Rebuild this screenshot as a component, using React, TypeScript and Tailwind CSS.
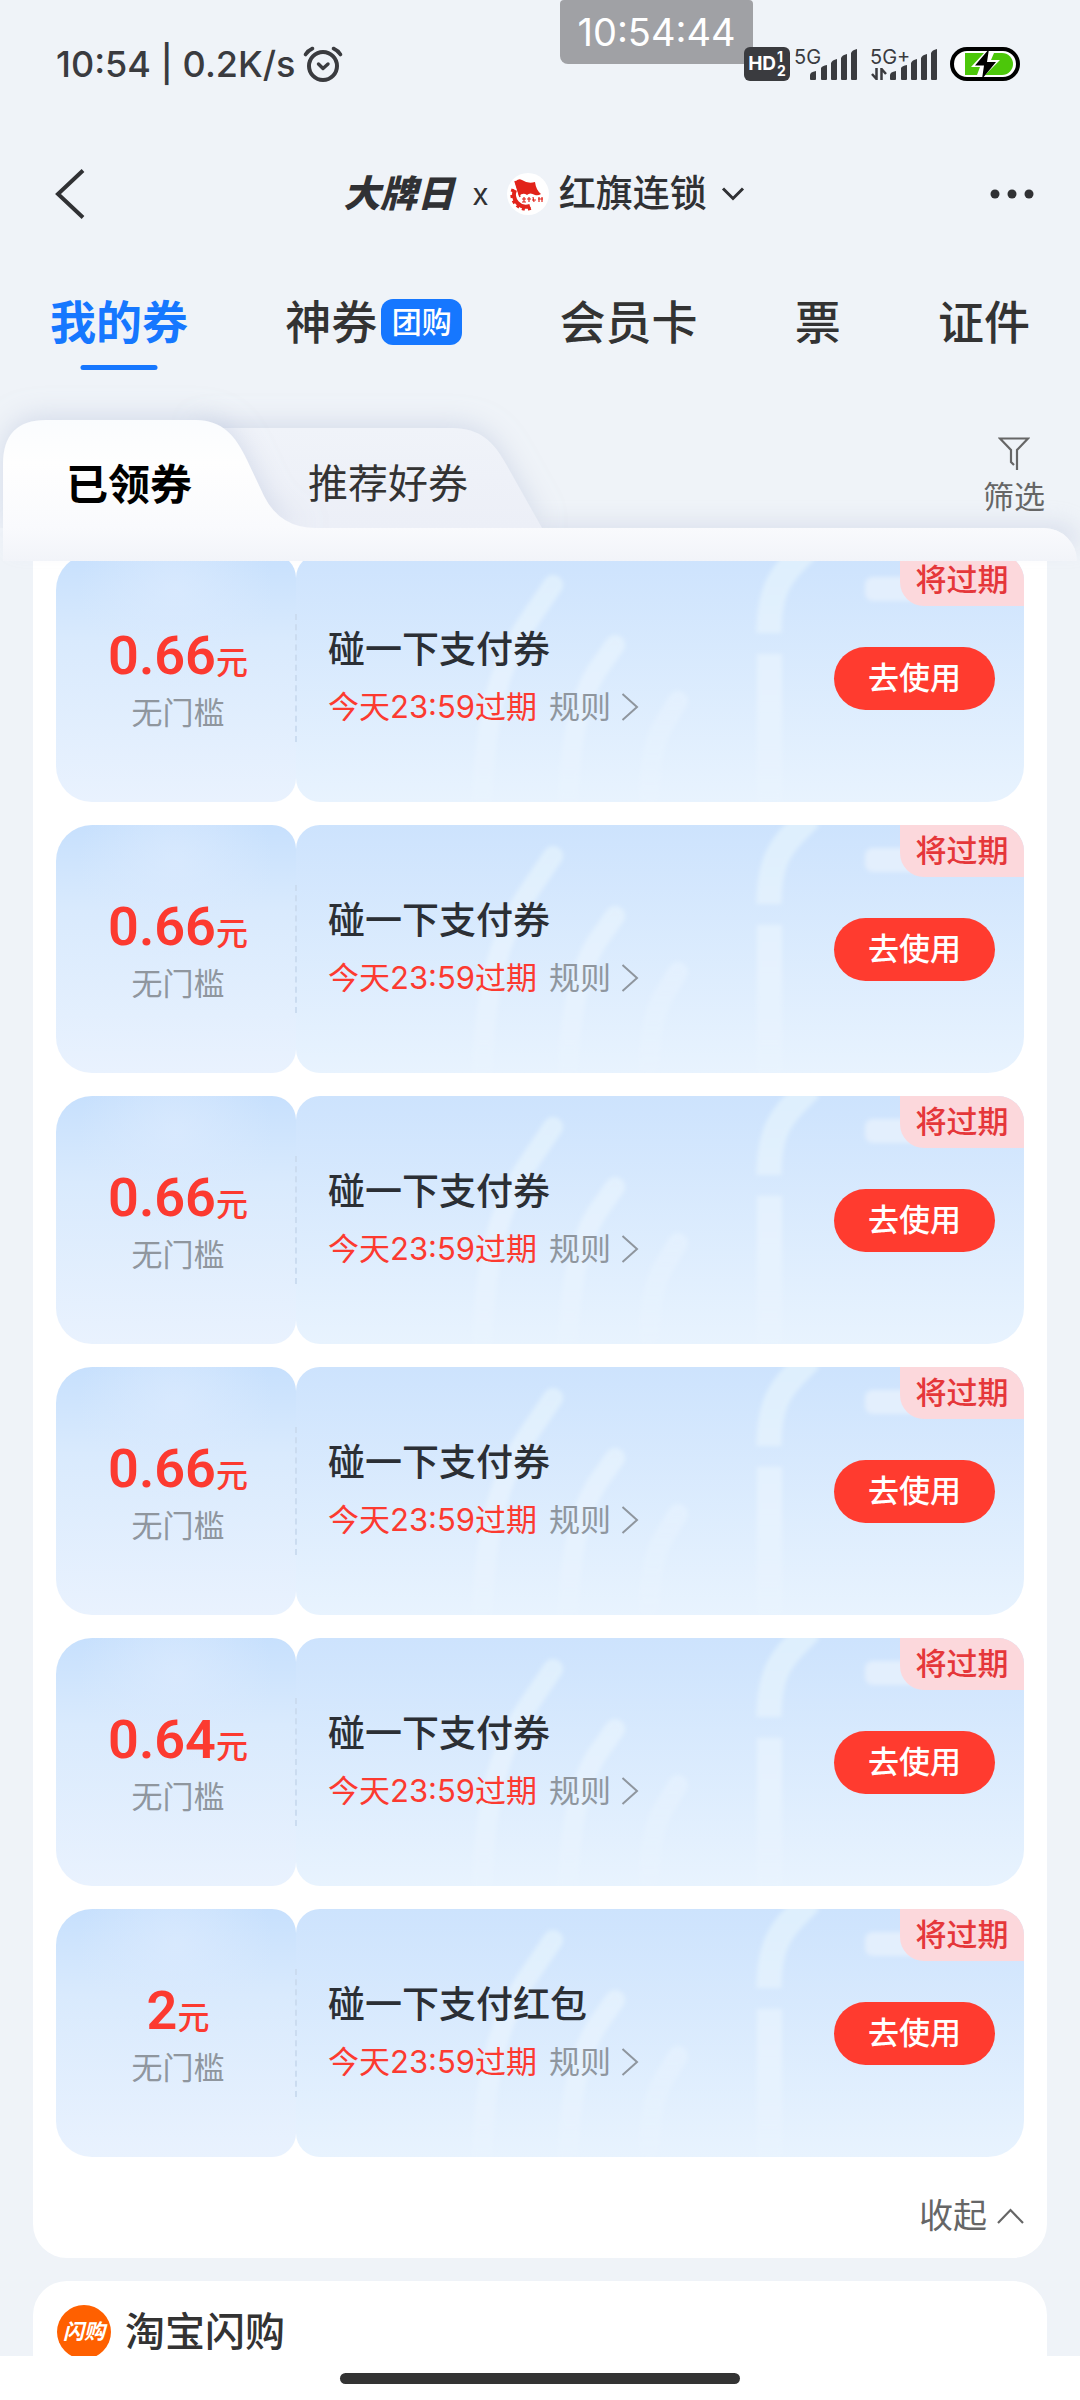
import { useState } from 'react';

interface Coupon {
  id: number;
  amount: string;
  title: string;
}

const COUPONS: Coupon[] = [
  { id: 1, amount: '0.66', title: '碰一下支付券' },
  { id: 2, amount: '0.66', title: '碰一下支付券' },
  { id: 3, amount: '0.66', title: '碰一下支付券' },
  { id: 4, amount: '0.66', title: '碰一下支付券' },
  { id: 5, amount: '0.64', title: '碰一下支付券' },
  { id: 6, amount: '2', title: '碰一下支付红包' },
];

const MAIN_TABS = [
  { name: '我的券' },
  { name: '神券', tag: '团购' },
  { name: '会员卡' },
  { name: '票' },
  { name: '证件' },
];

function AlarmIcon() {
  return (
    <svg width="40" height="36" viewBox="0 0 40 36" fill="none" stroke="#3a3b3f" strokeLinecap="round" strokeLinejoin="round">
      <circle cx="20" cy="20" r="14" strokeWidth="4" />
      <path d="M15.5 18l4.5 4.5 5-4.5" strokeWidth="3.4" />
      <path d="M2.5 8.5Q5 4.5 9.5 2.500M37.5 8.5Q35 4.5 30.500 2.500" strokeWidth="3.600" />
    </svg>
  );
}

function SignalBars() {
  return (
    <svg width="48" height="31" viewBox="0 0 48 31" fill="#3a3b3f">
      <path d="M0 30v-4q0-3 6-4v8q0 1-1 1H1q-1 0-1-1z" />
      <path d="M11 30V19q1-2 6-3v14q0 1-1 1h-4q-1 0-1-1z" />
      <path d="M21 30V14q1-3 6-4v20q0 1-1 1h-4q-1 0-1-1z" />
      <path d="M31 30V9q1-3 6-4v25q0 1-1 1h-4q-1 0-1-1z" />
      <path d="M41 30V4q1-3 6-4v30q0 1-1 1h-4q-1 0-1-1z" />
    </svg>
  );
}

function Battery() {
  return (
    <svg width="70" height="34" viewBox="0 0 70 34">
      <rect x="2" y="2" width="66" height="30" rx="15" fill="#fff" stroke="#000" strokeWidth="4" />
      <path d="M15 6h37a11 11 0 0 1 0 22H15z" fill="#4cc70a" />
      <path d="M34 6L21 20h9l-3 8h8L50 13h-9l3-7z" fill="#fff" />
      <path d="M39 2L25 18.500h9L32 32l14-17H37z" fill="#000" />
    </svg>
  );
}

function StatusBar() {
  return (
    <div className="relative flex h-32 shrink-0 items-center justify-between pl-14 pr-[60px] text-[#3a3b3f]">
      <div className="flex items-center gap-2">
        <span className="text-[36px] font-medium">10:54 | 0.2K/s</span>
        <AlarmIcon />
      </div>
      <div className="absolute left-[560px] top-0 flex h-16 w-[193px] items-center justify-center rounded-b-lg rounded-t bg-[#a0a1a5] text-[38px] text-white">
        10:54:44
      </div>
      <div className="relative flex items-center">
        <div className="flex h-[34px] w-[46px] items-center justify-center gap-px rounded-md bg-[#3a3b3f] text-white">
          <span className="text-[19px] font-bold">HD</span>
          <span className="flex flex-col text-[14px] font-bold leading-[14px]">
            <span>1</span>
            <span>2</span>
          </span>
        </div>
        <div className="relative ml-5 flex">
          <span className="absolute -left-4 -top-1 text-[20px] leading-6">5G</span>
          <SignalBars />
        </div>
        <div className="relative ml-8 flex">
          <span className="absolute -left-5 -top-1 text-[20px] leading-6">5G+</span>
          <svg className="absolute -left-[19px] bottom-0" width="16" height="12" viewBox="0 0 16 12" fill="none" stroke="#3a3b3f" strokeWidth="2.500">
            <path d="M5.500 0v11L1 6M10.500 12V1L15 6" />
          </svg>
          <SignalBars />
        </div>
        <div className="ml-3">
          <Battery />
        </div>
      </div>
    </div>
  );
}

function FlagLogo() {
  return (
    <svg width="42" height="42" viewBox="0 0 42 42">
      <circle cx="21" cy="21" r="21" fill="#fff" />
      <path d="M8 17A12 12 0 0 0 23 33" fill="none" stroke="#e2231a" strokeWidth="4" />
      <path d="M6 16A14.500 14.500 0 0 0 25 35" fill="none" stroke="#e2231a" strokeWidth="3" strokeDasharray="3 3" />
      <path d="M8 9q3-4 7-2 6 4 13 2 1 8 6 12-3 2-6 1-5-3-8 0-4-3-8 1z" fill="#e2231a" />
      <path d="M8 8l5 16" stroke="#e2231a" strokeWidth="1.500" />
      <path d="M15 26h4M17 24v5M15 29h4M22 24v5M20 26h4M26 24l1 5M25 27h4M32 24v5M31 26h5M35 24v5" stroke="#e2231a" strokeWidth="1.200" fill="none" />
    </svg>
  );
}

function NavBar() {
  return (
    <header className="flex h-[132px] shrink-0 items-center justify-between pl-[54px] pr-[46px] text-[#303134]">
      <button aria-label="返回" className="flex w-12">
        <svg width="32" height="50" viewBox="0 0 32 50" fill="none" stroke="#303134" strokeWidth="4">
          <path d="M29 1.500L4 25l25 23.500" />
        </svg>
      </button>
      <button className="flex items-center">
        <span className="text-[37px] font-black italic">大牌日</span>
        <span className="mx-[18px] text-[30px]">x</span>
        <FlagLogo />
        <span className="ml-2.5 text-[37px] font-medium">红旗连锁</span>
        <svg className="ml-3.5" width="24" height="14" viewBox="0 0 24 14" fill="none" stroke="#303134" strokeWidth="3">
          <path d="M2 1.500l10 10 10-10" />
        </svg>
      </button>
      <button aria-label="更多" className="flex w-12 justify-end">
        <svg width="44" height="10" viewBox="0 0 44 10" fill="#303134">
          <circle cx="5" cy="5" r="4.500" />
          <circle cx="22" cy="5" r="4.500" />
          <circle cx="39" cy="5" r="4.500" />
        </svg>
      </button>
    </header>
  );
}

function CouponTabs() {
  return (
    <div className="relative pt-9">
      {/* tab outlines */}
      <svg className="absolute left-0 top-0" width="600" height="144" viewBox="0 0 600 144">
        <defs>
          <linearGradient id="tabOn" x1="0" y1="0" x2="0" y2="1">
            <stop offset="0" stopColor="#fafcfe" />
            <stop offset="0.4" stopColor="#fefefe" />
            <stop offset="1" stopColor="#f9fafd" />
          </linearGradient>
          <linearGradient id="tabOff" x1="0" y1="0" x2="0" y2="1">
            <stop offset="0" stopColor="#f0f3f9" />
            <stop offset="1" stopColor="#eceff7" />
          </linearGradient>
          <filter id="tabShadow" x="-20%" y="-40%" width="140%" height="180%">
            <feDropShadow dx="0" dy="-4" stdDeviation="13" floodColor="#b9c3dc" floodOpacity="0.5" />
          </filter>
        </defs>
        <g filter="url(#tabShadow)">
          <path d="M200 44H452C480 44 494 58 506 80L542 144H200z" fill="url(#tabOff)" />
        </g>
        <g filter="url(#tabShadow)">
          <path d="M3 144V80Q3 36 46 36H196C222 36 236 52 247 76L264 112Q280 144 316 144z" fill="url(#tabOn)" />
        </g>
      </svg>
      <div className="relative flex h-[108px] items-center justify-between pl-[66px] pr-[35px]">
        <div className="flex items-center gap-[116px] pt-5">
          <button className="text-[42px] font-bold text-black">已领券</button>
          <button className="text-[40px] text-[#333]">推荐好券</button>
        </div>
        <button className="flex flex-col items-center pt-1 text-[31px] leading-9 text-[#666]">
          <svg className="mb-2" width="32" height="34" viewBox="0 0 32 34" fill="none" stroke="#666" strokeWidth="2.200">
            <path d="M19 33V13L30 1.500H2L13 13v12l3 3" />
          </svg>
          筛选
        </button>
      </div>
      {/* stays unpositioned so its shadow falls behind the tab outlines */}
      <div className="mx-[3px] h-[33px] rounded-tr-[36px] bg-linear-to-b from-[#f9fafd] to-[#f2f4f9] shadow-[8px_-10px_20px_-4px_rgba(185,195,220,0.35)]" />
    </div>
  );
}

function TicketPattern() {
  return (
    <svg className="absolute right-0 top-0" width="728" height="248" viewBox="0 0 728 248" fill="none">
      <defs>
        <linearGradient id="ray" x1="0" y1="0" x2="0" y2="248" gradientUnits="userSpaceOnUse">
          <stop offset="0" stopColor="#deeffd" />
          <stop offset="0.6" stopColor="#e6f2fe" />
          <stop offset="1" stopColor="#eaf4fe" stopOpacity="0.5" />
        </linearGradient>
        <filter id="soft" x="-10%" y="-10%" width="120%" height="120%">
          <feGaussianBlur stdDeviation="2" />
        </filter>
      </defs>
      <g filter="url(#soft)" stroke="url(#ray)" strokeWidth="20" strokeLinecap="round">
        <path d="M257 31L228 74C204 112 189 160 186 250" />
        <path d="M319 91L300 118C282 148 274 190 272 250" />
        <path d="M382 147L368 170C356 190 354 215 353 240" opacity="0.7" />
      </g>
      <g filter="url(#soft)">
        <path d="M514 -8C494 14 473 24 473 79" stroke="url(#ray)" strokeWidth="25" />
        <path d="M461 100H486V250H461z" fill="url(#ray)" />
        <rect x="569" y="23" width="60" height="24" rx="8" fill="#e3effd" />
      </g>
    </svg>
  );
}

function CouponCard({ coupon }: { coupon: Coupon }) {
  return (
    <li className="relative flex h-[248px]">
      <div className="flex w-60 shrink-0 flex-col items-center rounded-l-[36px] rounded-r-3xl bg-[radial-gradient(circle_at_50%_15%,rgba(218,234,254,0.8),transparent_40%),linear-gradient(to_bottom,#c7e0fd,#d9eafd_35%,#e9f2fe)] pl-1 pt-[70px]">
        <div className="flex items-baseline text-[#fc3a30]">
          <span className="font-['Roboto'] text-[54px] font-semibold leading-16">{coupon.amount}</span>
          <span className="text-[32px] font-medium leading-16">元</span>
        </div>
        <span className="text-[31px] leading-9 text-[#8f969e]">无门槛</span>
      </div>
      <div className="relative flex min-w-0 flex-1 items-center justify-between overflow-hidden rounded-l-3xl rounded-br-[36px] rounded-tr-[26px] bg-linear-to-b from-[#cde3fd] to-[#e8f3fe] pl-8 pr-[29px]">
        <TicketPattern />
        <div className="relative">
          <h3 className="text-[37px] font-medium leading-[58px] text-[#2b2f35]">{coupon.title}</h3>
          <div className="flex items-center text-[31px] leading-14">
            <span className="text-[#fc3a30]">今天23:59过期</span>
            <button className="ml-3 flex items-center gap-2.5 text-[#8f969e]">
              规则
              <svg width="18" height="28" viewBox="0 0 18 28" fill="none" stroke="#8f969e" strokeWidth="2">
                <path d="M1.500 1L16 14 1.500 27" />
              </svg>
            </button>
          </div>
        </div>
        <button className="relative h-[63px] w-[161px] rounded-full bg-[#ff3b2f] text-[31px] font-medium text-white">去使用</button>
        <span className="absolute right-0 top-0 flex h-[52px] w-[124px] items-center justify-center rounded-bl-3xl bg-[#fcd8dc] text-[31px] font-medium text-[#e5373a]">
          将过期
        </span>
      </div>
      <div className="absolute left-[239px] top-[60px] h-32 border-l-2 border-dashed border-[#cbdcf0]" />
    </li>
  );
}

export default function App() {
  const [activeTab, setActiveTab] = useState(0);

  return (
    <div className="flex h-screen flex-col overflow-hidden bg-[#eff3f8] font-['Inter','Noto_Sans_CJK_SC',sans-serif]">
      <StatusBar />
      <NavBar />

      <nav className="flex h-[124px] shrink-0 items-center justify-between px-[50px]">
        {MAIN_TABS.map((tab, idx) => (
          <button
            key={tab.name}
            onClick={() => setActiveTab(idx)}
            className={`relative flex items-center gap-1 text-[46px] leading-[60px] ${
              activeTab === idx ? 'font-bold text-[#1677ff]' : 'font-medium text-[#333]'
            }`}
          >
            {tab.name}
            {tab.tag && (
              <span className="flex h-[46px] w-[81px] items-center justify-center rounded-xl bg-[#1677ff] text-[30px] font-medium text-white">
                {tab.tag}
              </span>
            )}
            {activeTab === idx && (
              <span className="absolute -bottom-[18px] left-1/2 h-[5px] w-[77px] -translate-x-1/2 rounded-full bg-[#1677ff]" />
            )}
          </button>
        ))}
      </nav>

      <CouponTabs />

      {/* Scrolled coupon list */}
      <main className="min-h-0 flex-1 overflow-hidden px-[33px]">
        <section className="-mt-[7px] rounded-b-[34px] bg-white px-[23px]">
          <ul className="flex flex-col gap-[23px]">
            {COUPONS.map((c) => (
              <CouponCard key={c.id} coupon={c} />
            ))}
          </ul>
          <div className="flex h-[101px] items-center justify-end pt-4">
            <button className="flex items-center gap-2.5 text-[34px] text-[#666]">
              收起
              <svg width="27" height="16" viewBox="0 0 27 16" fill="none" stroke="#666" strokeWidth="2.200">
                <path d="M1 15L13.500 2 26 15" />
              </svg>
            </button>
          </div>
        </section>

        <section className="mt-[23px] flex items-center gap-3.5 rounded-t-[34px] bg-white px-6 py-6">
          <span className="flex size-[54px] items-center justify-center rounded-full bg-[#ff6000] text-[21px] font-bold italic text-white">闪购</span>
          <h2 className="text-[40px] font-medium leading-[54px] text-[#333]">淘宝闪购</h2>
        </section>
      </main>

      <footer className="flex h-11 shrink-0 items-start justify-center bg-white pt-[17px]">
        <div className="h-[11px] w-[400px] rounded-full bg-[#333]" />
      </footer>
    </div>
  );
}
